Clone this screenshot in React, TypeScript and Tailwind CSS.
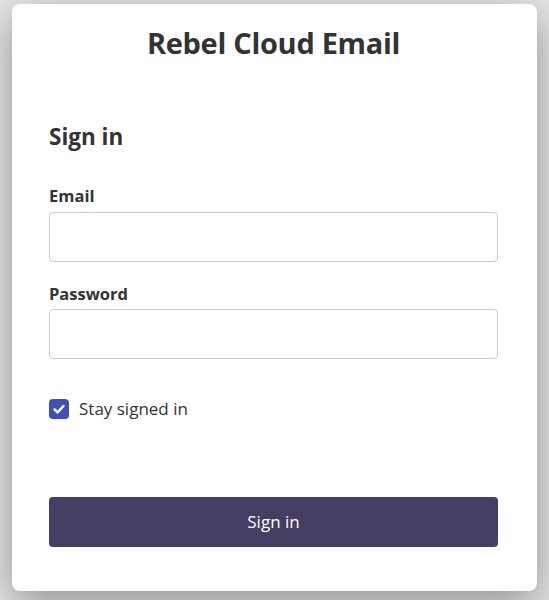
import { useState } from "react";

export default function App() {
  const [stay, setStay] = useState(true);

  return (
    <div className="min-h-screen bg-[#e6e6e6] px-3 pt-1 font-['Open_Sans',sans-serif] text-[#333]">
      <div className="w-[525px] rounded-lg bg-white pl-[37px] pr-[39px] pt-[21px] pb-[44px] shadow-[0_12px_40px_rgba(0,0,0,0.38)]">
        <h1 className="text-center text-[29px] font-bold leading-[36px] tracking-[-0.3px]">Rebel Cloud Email</h1>

        <h2 className="mt-[61px] text-[22.5px] font-bold leading-[30px]">Sign in</h2>

        <form onSubmit={(e) => e.preventDefault()}>
          <label className="mt-[32px] block text-[16.5px] font-bold leading-[24px]">Email</label>
          <input
            type="email"
            className="mt-[4px] block h-[50px] w-full rounded border border-[#ccc] px-3 text-[16px] outline-none focus:border-[#453e63]"
          />

          <label className="mt-[20px] block text-[16.5px] font-bold leading-[24px]">Password</label>
          <input
            type="password"
            className="mt-[3px] block h-[50px] w-full rounded border border-[#ccc] px-3 text-[16px] outline-none focus:border-[#453e63]"
          />

          <label className="mt-[38px] flex cursor-pointer items-center gap-[10px] text-[17px] leading-[24px]">
            <span
              onClick={() => setStay(!stay)}
              className={
                stay
                  ? "flex h-[20px] w-[20px] items-center justify-center rounded-[4px] bg-[#3f51b5]"
                  : "flex h-[20px] w-[20px] items-center justify-center rounded-[4px] border border-[#999] bg-white"
              }
            >
              {stay && (
                <svg width="14" height="14" viewBox="0 0 14 14" fill="none">
                  <path d="M2.5 7.3l3 3L11.5 4" stroke="white" strokeWidth="2.4" strokeLinecap="round" strokeLinejoin="round" />
                </svg>
              )}
            </span>
            Stay signed in
          </label>

          <button
            type="submit"
            className="mt-[76px] block h-[50px] w-full rounded bg-[#453e63] text-[17px] text-white hover:bg-[#3a3454]"
          >
            Sign in
          </button>
        </form>
      </div>
    </div>
  );
}
